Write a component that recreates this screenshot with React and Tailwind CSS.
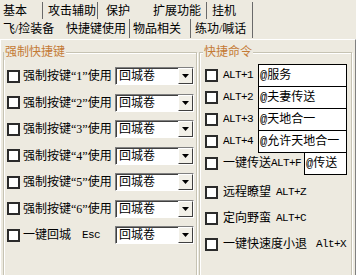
const TOP_ROW = [
  { t: "基本", w: "w-[43px]", pl: "pl-[3px]", sep: true },
  { t: "攻击辅助", w: "w-[55px]", pl: "pl-[5px]", sep: true },
  { t: "保护", w: "w-[55px]", pl: "pl-[8px]", sep: false },
  { t: "扩展功能", w: "w-[54px]", pl: "pl-0", sep: true },
  { t: "挂机", w: "w-[46px]", pl: "pl-[5px]", sep: true },
]

const BOTTOM_ROW = [
  { t: "飞/捡装备", w: "w-[62px]", pl: "pl-[3px]", sep: false },
  { t: "快捷键使用", w: "w-[68px]", pl: "pl-[4px]", sep: true },
  { t: "物品相关", w: "w-[61px]", pl: "pl-[3px]", sep: true },
  { t: "练功/喊话", w: "w-[62px]", pl: "pl-[4px]", sep: true },
]

const KEYS = ["1", "2", "3", "4", "5", "6"]

const CMDS = [
  { k: "ALT+1", v: "@服务" },
  { k: "ALT+2", v: "@夫妻传送" },
  { k: "ALT+3", v: "@天地合一" },
  { k: "ALT+4", v: "@允许天地合一" },
]

const EXTRA = [
  { t: "远程瞭望", k: "ALT+Z", gap: "ml-[5px]" },
  { t: "定向野蛮", k: "ALT+C", gap: "ml-[5px]" },
  { t: "一键快速度小退", k: "Alt+X", gap: "ml-[9px]" },
]

function TabRow({ items, className }) {
  return (
    <div className={"flex " + className}>
      {items.map((it) => (
        <div
          key={it.t}
          className={`${it.w} ${it.pl} flex items-center ${
            it.sep ? "border-r border-[#6a6a6a]" : ""
          }`}
        >
          {it.t}
        </div>
      ))}
    </div>
  )
}

function Check() {
  return <span className="w-[13px] h-[13px] shrink-0 border-2 border-[#2b2b2b] bg-white" />
}

function Combo() {
  return (
    <div className="w-[79px] h-[18px] flex bg-white border border-t-[#808080] border-l-[#808080] border-b-white border-r-white shadow-[inset_1px_1px_0_#404040]">
      <span className="flex-1 pl-[3px] flex items-center">回城卷</span>
      <span className="w-[15px] h-full bg-[#f2f0e8] border border-t-white border-l-white border-r-[#404040] border-b-[#404040] flex items-center justify-center">
        <svg width="7" height="4" viewBox="0 0 7 4">
          <path d="M0 0h7L3.5 4z" fill="#000" />
        </svg>
      </span>
    </div>
  )
}

function Mono({ children, className = "" }) {
  return (
    <span className={"font-['Liberation_Mono',monospace] text-[11px] tracking-[-0.6px] " + className}>
      {children}
    </span>
  )
}

export default function App() {
  return (
    <div className="w-[356px] h-[275px] overflow-hidden bg-[#edeae0] text-[12px] text-black leading-none font-['Liberation_Serif','Noto_Sans_CJK_SC',serif]">
      <TabRow items={TOP_ROW} className="h-[19px] pt-[2px]" />
      <TabRow items={BOTTOM_ROW} className="h-[20px] pb-[1px]" />

      <div className="flex h-[236px] border-t border-l border-white border-r border-r-[#808080] pl-[2px] pt-[4px] gap-[2px]">
        {/* 强制快捷键 */}
        <fieldset className="w-[194px] h-[260px] shrink-0 border border-[#c6c3b3] shadow-[inset_1px_1px_0_#fff,1px_1px_0_#fff]">
          <legend className="px-[1px] h-[16px] leading-[16px] text-[#c47a35] bg-[#edeae0]">
            强制快捷键
          </legend>
          <div className="flex flex-col pt-[3px] pl-[3px] pr-[2px]">
            {KEYS.map((k) => (
              <div key={k} className="flex items-center h-[26.5px]">
                <Check />
                <span className="ml-[3px] flex-1">强制按键“{k}”使用</span>
                <Combo />
              </div>
            ))}
            <div className="flex items-center h-[26.5px]">
              <Check />
              <span className="ml-[3px]">一键回城</span>
              <Mono className="ml-[11px] flex-1">Esc</Mono>
              <Combo />
            </div>
          </div>
        </fieldset>

        {/* 快捷命令 */}
        <fieldset className="w-[153px] h-[260px] shrink-0 border border-[#c6c3b3] shadow-[inset_1px_1px_0_#fff,1px_1px_0_#fff]">
          <legend className="px-[1px] ml-[3px] h-[16px] leading-[16px] text-[#c47a35] bg-[#edeae0]">
            快捷命令
          </legend>
          <div className="flex flex-col pt-[4px] pl-[5px] pr-[4px]">
            {CMDS.map((c) => (
              <div key={c.k} className="flex items-center h-[22px]">
                <Check />
                <Mono className="ml-[5px]">{c.k}</Mono>
                <div className="ml-auto self-start w-[89px] h-[23px] border border-black bg-white flex items-center pl-[1px] font-['Liberation_Mono','Noto_Sans_CJK_SC',monospace]">
                  {c.v}
                </div>
              </div>
            ))}
            <div className="flex items-center h-[22px]">
              <Check />
              <span className="ml-[5px]">一键传送</span>
              <Mono>ALT+F</Mono>
              <div className="ml-auto self-start w-[43px] h-[23px] border border-black bg-white flex items-center pl-[1px] font-['Liberation_Mono','Noto_Sans_CJK_SC',monospace]">
                @传送
              </div>
            </div>
            <div className="flex flex-col mt-[5px]">
              {EXTRA.map((e) => (
                <div key={e.k} className="flex items-center h-[26px]">
                  <Check />
                  <span className="ml-[5px]">{e.t}</span>
                  <Mono className={e.gap}>{e.k}</Mono>
                </div>
              ))}
            </div>
          </div>
        </fieldset>
      </div>
    </div>
  )
}
